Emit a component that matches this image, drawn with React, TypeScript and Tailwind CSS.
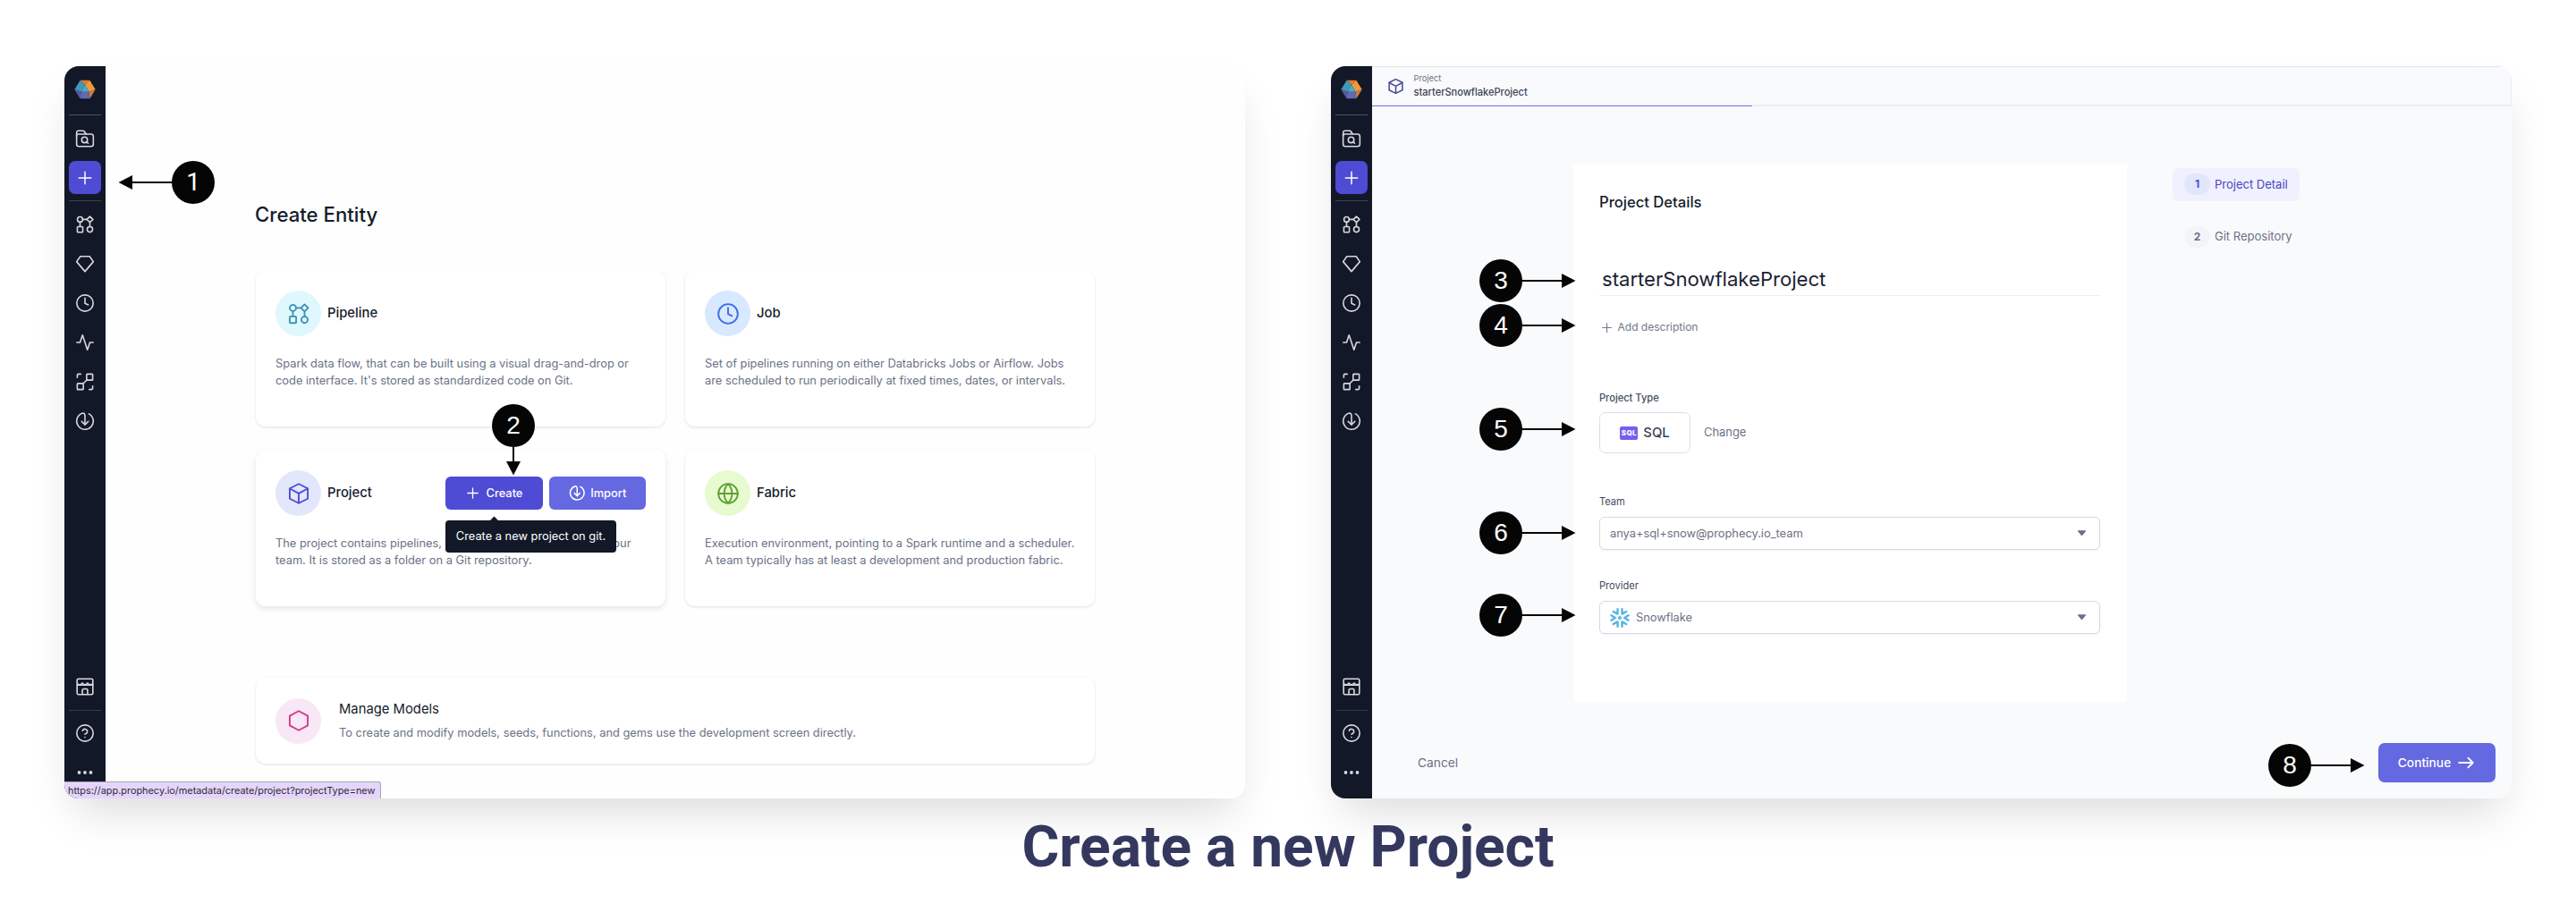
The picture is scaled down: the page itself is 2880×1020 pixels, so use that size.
import React from "react";

type IconProps = { size?: number; stroke?: number; className?: string };

function Svg({ size = 22, stroke = 1.75, className = "", children }: IconProps & { children: React.ReactNode }) {
  return (
    <svg
      width={size}
      height={size}
      viewBox="0 0 24 24"
      fill="none"
      stroke="currentColor"
      strokeWidth={stroke}
      strokeLinecap="round"
      strokeLinejoin="round"
      className={`block shrink-0 ${className}`}
    >
      {children}
    </svg>
  );
}

const FolderSearch = (p: IconProps) => (
  <Svg {...p}>
    <path d="M1.8 9V4.8a2.3 2.3 0 0 1 2.3-2.3h5.6a2 2 0 0 1 1.6.8l2 3.2" />
    <path d="M1.8 8.2a1.7 1.7 0 0 1 1.7-1.7h16a2.7 2.7 0 0 1 2.7 2.7v9.6a2.7 2.7 0 0 1-2.7 2.7H4.5a2.7 2.7 0 0 1-2.7-2.7Z" />
    <circle cx="11.5" cy="13.6" r="3.5" />
    <path d="m14.2 16.2 1.6 1.5" />
  </Svg>
);
const Pipeline = (p: IconProps) => (
  <Svg {...p}>
    <circle cx="6" cy="5.9" r="3.2" />
    <path d="M18 2.2 21.7 5.9 18 9.6 14.3 5.9Z" />
    <rect x="2.7" y="14.7" width="6.6" height="6.8" rx="0.8" />
    <circle cx="18" cy="18.1" r="3.3" />
    <path d="M9.2 5.9h5.1M6 9.1v5.6M18 9.6v5.2" />
  </Svg>
);
const Gem = (p: IconProps) => (
  <Svg {...p}>
    <path d="M6.4 3h11.2l4.6 6.4L12 21.4 1.8 9.4Z" />
  </Svg>
);
const Clock = (p: IconProps) => (
  <Svg {...p}>
    <circle cx="12" cy="12" r="10" />
    <path d="M12 5.8v6.4l4 1.9" />
  </Svg>
);
const Activity = (p: IconProps) => (
  <Svg {...p}>
    <path d="M22 12h-4l-3 9L9 3l-3 9H2" />
  </Svg>
);
const Lineage = (p: IconProps) => (
  <Svg {...p}>
    <rect x="14" y="2.6" width="7.4" height="7.4" rx="0.8" />
    <rect x="2.6" y="14" width="7.4" height="7.4" rx="0.8" />
    <path d="m9.8 14.2 4.4-4.4M2.6 6.8V4a1.4 1.4 0 0 1 1.4-1.4h2.8M21.4 17.2V20a1.4 1.4 0 0 1-1.4 1.4h-2.8" />
  </Svg>
);
const ImportIcon = (p: IconProps) => (
  <Svg {...p}>
    <path d="M16.8 3.1A10.1 10.1 0 1 1 8.6 2.5C10.8 1.9 12 3.2 12 5.2v11" />
    <path d="m8 12.4 4 4 4-4" />
  </Svg>
);
const Store = (p: IconProps) => (
  <Svg {...p}>
    <rect x="2.4" y="2.4" width="19.2" height="19.2" rx="1.6" />
    <path d="M2.6 9.9h18.8" />
    <path strokeWidth="1.5" d="M2.8 8.6c1.6 1.4 4.4 1.4 6-1.2 1.6 2.6 4.8 2.6 6.4 0 1.6 2.6 4.4 2.6 6 1.2" />
    <path d="M8.8 21.4v-5.2a1.4 1.4 0 0 1 1.4-1.4h3.6a1.4 1.4 0 0 1 1.4 1.4v5.2" />
  </Svg>
);
const Help = (p: IconProps) => (
  <Svg {...p}>
    <circle cx="12" cy="12" r="10" />
    <path d="M9.1 9a3 3 0 0 1 5.83 1c0 2-3 3-3 3M12 17h.01" />
  </Svg>
);
const Dots = () => (
  <svg width="22" height="22" viewBox="0 0 22 22" fill="currentColor" className="block">
    <circle cx="4.5" cy="11" r="1.9" />
    <circle cx="11" cy="11" r="1.9" />
    <circle cx="17.5" cy="11" r="1.9" />
  </svg>
);
const Plus = (p: IconProps) => (
  <Svg {...p}>
    <path d="M12 3v18M3 12h18" />
  </Svg>
);
const Cube = (p: IconProps) => (
  <Svg {...p}>
    <path d="M12 2.1 21.3 6.7v10.6L12 21.9 2.7 17.3V6.7Z" />
    <path d="M2.9 6.9 12 11.9l9.1-5M12 11.9v9.8" />
  </Svg>
);
const Hexagon = (p: IconProps) => (
  <Svg {...p}>
    <path d="M12 2.1 21.3 7.1v9.8L12 21.9 2.7 16.9V7.1Z" />
  </Svg>
);
const Globe = (p: IconProps) => (
  <Svg {...p}>
    <circle cx="12" cy="12" r="10" />
    <path d="M2 12h20M12 2c-5.4 5.6-5.4 14.4 0 20M12 2c5.4 5.6 5.4 14.4 0 20" />
  </Svg>
);

function Logo() {
  return (
    <svg width="24" height="22" viewBox="0 0 72 66" className="block">
      <path d="M20 2h32L36 17Z" fill="#e87b35" />
      <path d="M52 2 71 33 49 41 36 17Z" fill="#eb9c3e" />
      <path d="M71 33 53 64 49 41Z" fill="#cf7a3c" />
      <path d="M20 2 36 17 23 41 1 33Z" fill="#4198b5" />
      <path d="M36 17 49 41H23Z" fill="#4badcf" />
      <path d="M23 41h26l4 23H19Z" fill="#6169b3" />
      <path d="M1 33 23 41 19 64Z" fill="#565aa5" />
    </svg>
  );
}

function Snowflake() {
  return (
    <svg
      width="22"
      height="22"
      viewBox="-11.5 -11.5 23 23"
      fill="none"
      stroke="#56b4e8"
      strokeWidth="2.5"
      strokeLinecap="round"
      strokeLinejoin="round"
      className="block"
    >
      <path d="M-2.6 -10.2V-4.6L-7.6 -7.4M2.6 -10.2V-4.6L7.6 -7.4" />
      <path d="M-2.6 10.2V4.6L-7.6 7.4M2.6 10.2V4.6L7.6 7.4" />
      <path d="M-10 -2.8-5.4 0-10 2.8M10 -2.8 5.4 0 10 2.8" />
      <path d="M0 -1.7 1.7 0 0 1.7-1.7 0Z" strokeWidth="1.5" />
    </svg>
  );
}

function NavSlot({ children }: { children: React.ReactNode }) {
  return <div className="flex h-11 w-full items-center justify-center">{children}</div>;
}

function Sidebar() {
  return (
    <nav className="flex w-[46px] shrink-0 flex-col items-center bg-[#121827] text-[#d5d8de]">
      <div className="mt-[15px]">
        <Logo />
      </div>
      <div className="mt-[17px] h-px w-9 bg-[#4b5362]" />
      <div className="mt-[15px]">
        <FolderSearch />
      </div>
      <div className="mt-[14px] flex h-[37px] w-9 items-center justify-center rounded-[7px] bg-[#4e4bd4] text-white">
        <Plus size={18} stroke={2} />
      </div>
      <div className="mt-[7px] h-px w-9 bg-[#3a4252]" />
      <div className="mt-[4px] flex w-full flex-col">
        <NavSlot><Pipeline /></NavSlot>
        <NavSlot><Gem /></NavSlot>
        <NavSlot><Clock /></NavSlot>
        <NavSlot><Activity /></NavSlot>
        <NavSlot><Lineage /></NavSlot>
        <NavSlot><ImportIcon /></NavSlot>
      </div>
      <div className="mt-auto">
        <Store />
      </div>
      <div className="mt-[15px] h-px w-9 bg-[#343b4b]" />
      <div className="mt-[14px]">
        <Help />
      </div>
      <div className="mt-[22px] mb-[18px]">
        <Dots />
      </div>
    </nav>
  );
}

function Window({ className, children }: { className: string; children: React.ReactNode }) {
  return (
    <section className={`h-[819px] w-[1320px] rounded-2xl shadow-[0_25px_50px_-12px_rgba(0,0,0,0.15)] ${className}`}>
      <div className="relative flex h-full w-full overflow-hidden rounded-2xl">{children}</div>
    </section>
  );
}

function EntityCard(props: {
  title: string;
  lines: string[];
  circle: string;
  icon: React.ReactNode;
  shadow?: string;
  actions?: React.ReactNode;
}) {
  const shadow = props.shadow ?? "shadow-[0_1px_3px_rgba(0,0,0,0.12)]";
  return (
    <article className={`h-[174px] w-[458px] rounded-[11px] bg-white p-[22px] ${shadow}`}>
      <div className="flex h-[51px] items-center">
        <div className={`flex size-[51px] items-center justify-center rounded-full ${props.circle}`}>{props.icon}</div>
        <h3 className="ml-[7px] text-[14.8px] font-medium text-[#151b2b]">{props.title}</h3>
        {props.actions}
      </div>
      <p className="mt-[22px] text-[12.83px] leading-[18.5px] whitespace-nowrap text-[#6b7285]">
        {props.lines.map((l) => (
          <span key={l} className="block">{l}</span>
        ))}
      </p>
    </article>
  );
}

function ProjectActions() {
  return (
    <div className="relative ml-auto flex gap-[7px] text-[12.83px] font-medium text-white">
      <button className="flex h-[37px] w-[109px] items-center justify-center rounded-[6px] bg-[#4e4bd4] shadow-xs">
        <Plus size={15} stroke={2.1} />
        <span className="ml-2">Create</span>
      </button>
      <button className="flex h-[37px] w-[108px] items-center justify-center rounded-[6px] bg-[#6468e1] shadow-xs">
        <ImportIcon size={18.5} stroke={2} />
        <span className="ml-1.5">Import</span>
      </button>
      <div className="absolute top-[49px] left-0 z-10 flex h-[36px] w-[191px] items-center justify-center rounded-[4px] bg-[#121827] font-normal whitespace-nowrap">
        <span className="absolute -top-[3px] left-[51px] size-[7px] rotate-45 bg-[#121827]" />
        Create a new project on git.
      </div>
    </div>
  );
}

function CreateEntityWindow() {
  return (
    <Window className="bg-white">
      <Sidebar />
      <main className="flex flex-1 flex-col bg-[#fefefe] pt-[152px] pl-[168px]">
        <h1 className="-ml-px text-[22.2px] leading-7 font-medium text-[#151b2b]">Create Entity</h1>
        <div className="mt-[49px] grid w-[938px] grid-cols-2 gap-x-[22px] gap-y-[27px]">
          <EntityCard
            title="Pipeline"
            circle="bg-[#dff8fd] text-[#3f93b3]"
            icon={<Pipeline size={26} />}
            lines={["Spark data flow, that can be built using a visual drag-and-drop or", "code interface. It's stored as standardized code on Git."]}
          />
          <EntityCard
            title="Job"
            circle="bg-[#d8e8fe] text-[#3a6ee8]"
            icon={<Clock size={26} />}
            lines={["Set of pipelines running on either Databricks Jobs or Airflow. Jobs", "are scheduled to run periodically at fixed times, dates, or intervals."]}
          />
          <EntityCard
            title="Project"
            circle="bg-[#e2e7fc] text-[#4f4cd6]"
            icon={<Cube size={26} />}
            shadow="shadow-[0_3px_7px_rgba(0,0,0,0.1)]"
            actions={<ProjectActions />}
            lines={["The project contains pipelines, datasets, and jobs, owned by your", "team. It is stored as a folder on a Git repository."]}
          />
          <EntityCard
            title="Fabric"
            circle="bg-[#e8fad0] text-[#5fa032]"
            icon={<Globe size={26} />}
            lines={["Execution environment, pointing to a Spark runtime and a scheduler.", "A team typically has at least a development and production fabric."]}
          />
        </div>
        <article className="mt-[80px] flex h-[96px] w-[938px] items-center rounded-[11px] bg-white px-[22px] shadow-[0_1px_3px_rgba(0,0,0,0.12)]">
          <div className="flex size-[51px] items-center justify-center rounded-full bg-[#f8e7f4] text-[#d43a8b]">
            <Hexagon size={26} />
          </div>
          <div className="ml-5">
            <h3 className="text-[14.8px] leading-5 text-[#151b2b]">Manage Models</h3>
            <p className="mt-[8px] text-[12.83px] leading-[18px] text-[#6b7285]">
              To create and modify models, seeds, functions, and gems use the development screen directly.
            </p>
          </div>
        </article>
      </main>
      <div className="absolute bottom-0 left-0 flex h-[19px] w-[354px] items-center rounded-tr-[3px] border-t border-r border-[#a9a3b5] bg-[#e5d5fb] pl-1 text-[10.9px] text-[#2b2b33]">
        https://app.prophecy.io/metadata/create/project?projectType=new
      </div>
    </Window>
  );
}

function Select({ children }: { children: React.ReactNode }) {
  return (
    <div className="mt-[9px] flex h-[37px] items-center rounded-[6px] border border-[#d5d9e3] bg-white px-[11px] text-[12.83px] text-[#6b7285] shadow-xs">
      {children}
      <svg width="11" height="7" viewBox="0 0 11 7" className="mr-[3px] ml-auto block">
        <path d="M1.3 0.8h8.4L5.5 6Z" fill="#6b7088" stroke="#6b7088" strokeLinejoin="round" />
      </svg>
    </div>
  );
}

function Step({ n, label, active }: { n: string; label: string; active?: boolean }) {
  return (
    <div className={`flex h-[36.5px] w-fit items-center rounded-[6px] px-[13px] ${active ? "bg-[#eff1fe] text-[#4a44c6]" : "text-[#6b7285]"}`}>
      <span className={`flex h-6 w-[29px] items-center justify-center rounded-full text-[12px] font-bold ${active ? "bg-[#e1e6fc] text-[#4f4cd6]" : "bg-[#f2f4f7]"}`}>
        {n}
      </span>
      <span className="ml-[5px] text-[13px]">{label}</span>
    </div>
  );
}

function ProjectWindow() {
  return (
    <Window className="bg-[#f9fafc]">
      <Sidebar />
      <main className="flex flex-1 flex-col bg-[#f9fafc]">
        <header className="relative flex h-[45px] items-center border-t border-r border-b-2 border-t-[#e4e5ee] border-r-[#e9ebf0] border-b-[#eaecef] pl-[17px]">
          <Cube size={19} stroke={2} className="text-[#4a4c97]" />
          <div className="ml-[10.5px] flex flex-col">
            <span className="text-[9.3px] leading-[12px] text-[#6b7285]">Project</span>
            <span className="mt-[2px] text-[11.05px] leading-[14px] font-medium text-[#3a4255]">starterSnowflakeProject</span>
          </div>
          <div className="absolute -bottom-[2px] left-0 h-px w-[425px] bg-[#7377ec]" />
        </header>
        <div className="flex">
          <div className="mt-[65px] ml-[225px] h-[601px] w-[619px] bg-white pt-[30px] pr-[30px] pl-[29px]">
            <h2 className="text-[16.6px] leading-6 font-medium text-[#151b2b]">Project Details</h2>
            <div className="mt-[58px] h-[35px] border-b border-[#eceef1] pl-[3px] text-[22.1px] leading-8 text-[#1b2232]">
              starterSnowflakeProject
            </div>
            <div className="mt-[27px] flex h-4 items-center pl-px text-[12px] text-[#717889]">
              <Plus size={13} stroke={2} className="ml-px" />
              <span className="ml-[5.5px]">Add description</span>
            </div>
            <div className="mt-[63px] text-[11.1px] leading-4 font-medium text-[#434b5d]">Project Type</div>
            <div className="mt-2 flex items-center">
              <div className="flex h-[46px] w-[102px] items-center justify-center rounded-[7px] border border-[#dcdfe8] text-[14.8px] font-medium text-[#3a4255]">
                <span className="flex h-[15px] w-5 items-center justify-center rounded-[2px] bg-[#7360f0] text-[8px] leading-none font-extrabold tracking-[0.3px] text-white">
                  SQL
                </span>
                <span className="ml-1.5">SQL</span>
              </div>
              <span className="ml-[15px] text-[12.9px] text-[#6b7285]">Change</span>
            </div>
            <div className="mt-[46px] text-[11.1px] leading-4 text-[#434b5d]">Team</div>
            <Select>anya+sql+snow@prophecy.io_team</Select>
            <div className="mt-8 text-[11.1px] leading-4 text-[#434b5d]">Provider</div>
            <Select>
              <Snowflake />
              <span className="ml-[7px]">Snowflake</span>
            </Select>
          </div>
          <div className="mt-[69px] ml-[51px] flex flex-col gap-[22px]">
            <Step n="1" label="Project Detail" active />
            <Step n="2" label="Git Repository" />
          </div>
        </div>
        <footer className="mt-auto mb-[18px] flex items-center justify-between pr-[18px] pl-[51px] text-[13.75px]">
          <span className="text-[#6b7088]">Cancel</span>
          <button className="flex h-11 w-[131px] items-center justify-center rounded-[7px] bg-[#6468e1] font-medium text-white shadow-xs">
            Continue
            <Svg size={22} stroke={2} className="ml-1.5">
              <path d="M3.5 12h16.8M14.6 6.2l5.8 5.8-5.8 5.8" />
            </Svg>
          </button>
        </footer>
      </main>
    </Window>
  );
}

type Callout = { n: string; x: number; y: number; dir: "left" | "right" | "down" };

const callouts: Callout[] = [
  { n: "1", x: 216, y: 204, dir: "left" },
  { n: "2", x: 574, y: 476, dir: "down" },
  { n: "3", x: 1678, y: 314, dir: "right" },
  { n: "4", x: 1678, y: 364, dir: "right" },
  { n: "5", x: 1678, y: 480, dir: "right" },
  { n: "6", x: 1678, y: 596, dir: "right" },
  { n: "7", x: 1678, y: 688, dir: "right" },
  { n: "8", x: 2560, y: 856, dir: "right" },
];

const arrows = {
  left: "M0 -1H-68V-8L-83.5 0L-68 8V1H0Z",
  right: "M0 -1H68V-8L83.5 0L68 8V1H0Z",
  down: "M-1 0V40H-8L0 55.5L8 40H1V0Z",
};

function CalloutMarker({ n, x, y, dir }: Callout) {
  return (
    <div className="absolute z-20" style={{ left: x - 24, top: y - 24 }}>
      <svg width="48" height="48" viewBox="-24 -24 48 48" className="absolute top-0 left-0 overflow-visible">
        <path d={arrows[dir]} fill="#050505" />
      </svg>
      <div
        className={`relative flex size-12 items-center justify-center rounded-full bg-[#050505] text-[28px] leading-none text-white ${
          n === "1" ? "font-['Roboto']" : "font-['Liberation_Sans',sans-serif]"
        }`}
      >
        {n}
      </div>
    </div>
  );
}

export default function App() {
  return (
    <div className="relative h-[1020px] w-[2880px] overflow-hidden bg-white pt-[74px] font-['Inter',sans-serif]">
      <div className="flex justify-between px-[72px]">
        <CreateEntityWindow />
        <ProjectWindow />
      </div>
      <h1 className="relative mt-[17px] text-center font-['Roboto',sans-serif] text-[64px] leading-[75px] font-bold text-[#34385f]">
        Create a new Project
      </h1>
      {callouts.map((c) => (
        <CalloutMarker key={c.n} {...c} />
      ))}
    </div>
  );
}
